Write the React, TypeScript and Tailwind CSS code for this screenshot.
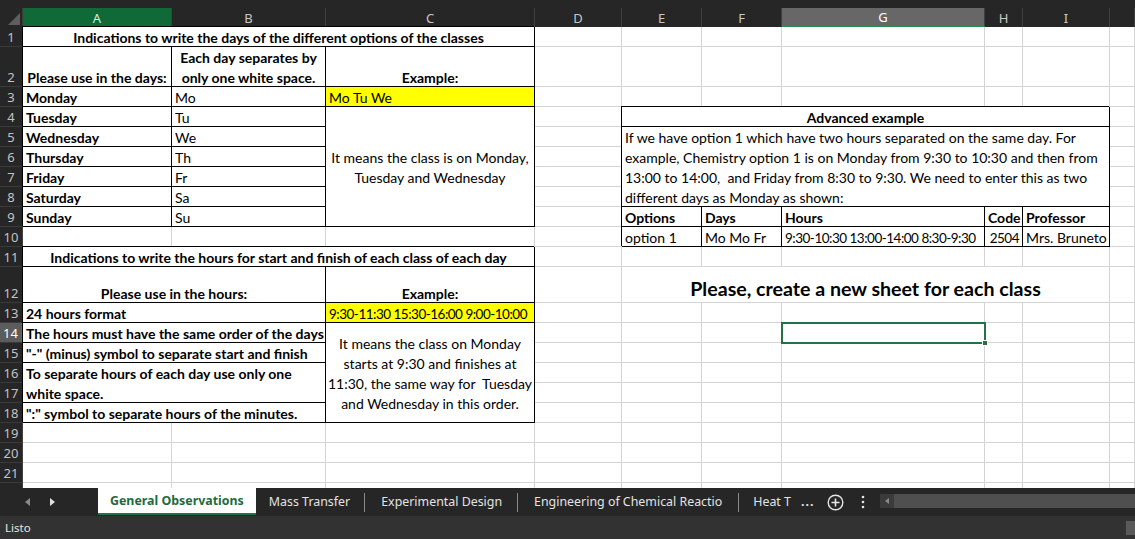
import React from "react";

const COLS = ["A", "B", "C", "D", "E", "F", "G", "H", "I", ""];
const ROWS = Array.from({ length: 22 }, (_, i) => i + 1);

const boxed = "border-r border-b border-black shadow-[-1px_-1px_0_0_#000]";

function Cell({
  className,
  lines,
  center,
  bottom,
  tight,
}: {
  className: string;
  lines: string[];
  center?: boolean;
  bottom?: boolean;
  tight?: boolean;
}) {
  return (
    <div className={`relative z-10 flex bg-white px-[3px] overflow-hidden ${bottom ? "items-end" : ""} ${className}`}>
      <div
        className={`leading-[20px] whitespace-pre ${bottom ? "translate-y-[2px]" : "translate-y-[1px]"} ${
          center ? "text-center" : ""
        } ${tight ? "text-[13.5px] tracking-[-0.5px]" : ""}`}
      >
        {lines.map((l) => (
          <div key={l}>{l}</div>
        ))}
      </div>
    </div>
  );
}

function Sheet() {
  return (
    <div className="grid h-[480px] overflow-hidden grid-cols-[23px_149px_154px_209px_87px_80px_80px_203px_38px_87px_25px] grid-rows-[19px_20px_40px_repeat(9,20px)_36px_repeat(10,20px)] font-['Lato',sans-serif] text-[14px] text-black">
      {/* corner */}
      <div className="col-start-1 row-start-1 relative bg-[#262626] border-r border-[#3a3a3a]">
        <svg className="absolute right-[2px] bottom-[2px]" width="12" height="12" viewBox="0 0 12 12">
          <polygon points="12,0 12,12 0,12" fill="#5e5e5e" />
        </svg>
      </div>
      {/* column headers */}
      {COLS.map((c, i) => {
        const base =
          "flex items-center justify-center pt-[2px] font-['Noto_Sans',sans-serif] text-[13px] row-start-1 ";
        let cls = "bg-[#262626] text-[#c8c8c8] border-r border-[#3f3f3f]";
        if (c === "A") cls = "bg-[#0f6a37] text-[#d8eadf] border-r border-[#3f3f3f]";
        if (c === "G") cls = "bg-[#676767] text-white border-b-2 border-b-[#2a8a55] border-r border-r-[#3f3f3f]";
        return (
          <div key={c + i} className={base + cls} style={{ gridColumn: i + 2 }}>
            {c}
          </div>
        );
      })}
      {/* row headers */}
      {ROWS.map((r) => (
        <div
          key={"h" + r}
          className={
            "col-start-1 flex items-end justify-center font-['Noto_Sans',sans-serif] text-[13px] leading-[18px] border-b border-[#3a3a3a] " +
            (r === 14
              ? "bg-[#5c5c5c] text-white border-r-2 border-r-[#2a8a55]"
              : "bg-[#262626] text-[#c3c3c3] border-r border-r-[#3f3f3f]")
          }
          style={{ gridRow: r + 1 }}
        >
          {r}
        </div>
      ))}
      {/* empty cells with gridlines */}
      {ROWS.map((r) =>
        COLS.map((c, i) => (
          <div
            key={r + "-" + i}
            className="bg-white border-r border-b border-[#d4d4d4]"
            style={{ gridRow: r + 1, gridColumn: i + 2 }}
          />
        ))
      )}

      {/* days table */}
      <Cell
        className={`col-start-2 col-span-3 row-start-2 justify-center font-bold ${boxed}`}
        lines={["Indications to write the days of the different options of the classes"]}
      />
      <Cell className={`col-start-2 row-start-3 justify-center font-bold ${boxed}`} lines={["Please use in the days:"]} bottom />
      <Cell
        className={`col-start-3 row-start-3 justify-center font-bold ${boxed}`}
        lines={["Each day separates by", "only one white space."]}
        center
        bottom
      />
      <Cell className={`col-start-4 row-start-3 justify-center font-bold ${boxed}`} lines={["Example:"]} bottom />

      <Cell className={`col-start-2 row-start-4 font-bold ${boxed}`} lines={["Monday"]} />
      <Cell className={`col-start-2 row-start-5 font-bold ${boxed}`} lines={["Tuesday"]} />
      <Cell className={`col-start-2 row-start-6 font-bold ${boxed}`} lines={["Wednesday"]} />
      <Cell className={`col-start-2 row-start-7 font-bold ${boxed}`} lines={["Thursday"]} />
      <Cell className={`col-start-2 row-start-8 font-bold ${boxed}`} lines={["Friday"]} />
      <Cell className={`col-start-2 row-start-9 font-bold ${boxed}`} lines={["Saturday"]} />
      <Cell className={`col-start-2 row-start-10 font-bold ${boxed}`} lines={["Sunday"]} />

      <Cell className={`col-start-3 row-start-4 ${boxed}`} lines={["Mo"]} />
      <Cell className={`col-start-3 row-start-5 ${boxed}`} lines={["Tu"]} />
      <Cell className={`col-start-3 row-start-6 ${boxed}`} lines={["We"]} />
      <Cell className={`col-start-3 row-start-7 ${boxed}`} lines={["Th"]} />
      <Cell className={`col-start-3 row-start-8 ${boxed}`} lines={["Fr"]} />
      <Cell className={`col-start-3 row-start-9 ${boxed}`} lines={["Sa"]} />
      <Cell className={`col-start-3 row-start-10 ${boxed}`} lines={["Su"]} />

      <Cell className={`col-start-4 row-start-4 !bg-[#ffff00] ${boxed}`} lines={["Mo Tu We"]} />
      <Cell
        className={`col-start-4 row-start-5 row-span-6 items-center justify-center ${boxed}`}
        lines={["It means the class is on Monday,", "Tuesday and Wednesday"]}
        center
      />

      {/* hours table */}
      <Cell
        className={`col-start-2 col-span-3 row-start-12 justify-center font-bold ${boxed}`}
        lines={["Indications to write the hours for start and finish of each class of each day"]}
      />
      <Cell
        className={`col-start-2 col-span-2 row-start-13 justify-center font-bold ${boxed}`}
        lines={["Please use in the hours:"]}
        bottom
      />
      <Cell className={`col-start-4 row-start-13 justify-center font-bold ${boxed}`} lines={["Example:"]} bottom />
      <Cell className={`col-start-2 col-span-2 row-start-14 font-bold ${boxed}`} lines={["24 hours format"]} />
      <Cell
        className={`col-start-4 row-start-14 !bg-[#ffff00] ${boxed}`}
        lines={["9:30-11:30 15:30-16:00 9:00-10:00"]}
        tight
      />
      <Cell
        className={`col-start-2 col-span-2 row-start-15 font-bold ${boxed}`}
        lines={["The hours must have the same order of the days"]}
      />
      <Cell
        className={`col-start-2 col-span-2 row-start-16 font-bold ${boxed}`}
        lines={['"-" (minus) symbol to separate start and finish']}
      />
      <Cell
        className={`col-start-2 col-span-2 row-start-17 row-span-2 font-bold ${boxed}`}
        lines={["To separate hours of each day use only one", "white space."]}
        bottom
      />
      <Cell
        className={`col-start-2 col-span-2 row-start-19 font-bold ${boxed}`}
        lines={['":" symbol to separate hours of the minutes.']}
      />
      <Cell
        className={`col-start-4 row-start-15 row-span-5 items-center justify-center ${boxed}`}
        lines={[
          "It means the class on Monday",
          "starts at 9:30 and finishes at",
          "11:30, the same way for  Tuesday",
          "and Wednesday in this order.",
        ]}
        center
      />

      {/* advanced example */}
      <Cell className={`col-start-6 col-span-5 row-start-5 justify-center font-bold ${boxed}`} lines={["Advanced example"]} />
      <Cell
        className={`col-start-6 col-span-5 row-start-6 row-span-4 ${boxed}`}
        lines={[
          "If we have option 1 which have two hours separated on the same day. For",
          "example, Chemistry option 1 is on Monday from 9:30 to 10:30 and then from",
          "13:00 to 14:00,  and Friday from 8:30 to 9:30. We need to enter this as two",
          "different days as Monday as shown:",
        ]}
      />
      <Cell className={`col-start-6 row-start-10 font-bold ${boxed}`} lines={["Options"]} />
      <Cell className={`col-start-7 row-start-10 font-bold ${boxed}`} lines={["Days"]} />
      <Cell className={`col-start-8 row-start-10 font-bold ${boxed}`} lines={["Hours"]} />
      <Cell className={`col-start-9 row-start-10 font-bold ${boxed}`} lines={["Code"]} />
      <Cell className={`col-start-10 row-start-10 font-bold ${boxed}`} lines={["Professor"]} />
      <Cell className={`col-start-6 row-start-11 ${boxed}`} lines={["option 1"]} />
      <Cell className={`col-start-7 row-start-11 ${boxed}`} lines={["Mo Mo Fr"]} />
      <Cell className={`col-start-8 row-start-11 ${boxed}`} lines={["9:30-10:30 13:00-14:00 8:30-9:30"]} tight />
      <Cell className={`col-start-9 row-start-11 justify-end ${boxed}`} lines={["2504"]} tight />
      <Cell className={`col-start-10 row-start-11 ${boxed}`} lines={["Mrs. Bruneto"]} />

      <Cell
        className="col-start-6 col-span-5 row-start-13 justify-center pb-[5px] font-bold text-[19.6px] border-r border-b border-[#d4d4d4]"
        lines={["Please, create a new sheet for each class"]}
        bottom
      />

      {/* active cell */}
      <div className="relative z-20 col-start-8 row-start-15 -m-px border-2 border-[#217346]">
        <div className="absolute right-[-4px] bottom-[-4px] w-[6px] h-[6px] bg-[#217346] border border-white" />
      </div>
    </div>
  );
}

function Tabs() {
  return (
    <div className="flex h-[28px] items-start bg-[#262626] font-['Noto_Sans',sans-serif] text-[12.4px] text-[#e3e3e3]">
      <div className="flex h-[27px] w-[98px] items-center gap-[19px] pl-[25px]">
        <svg width="6" height="8" viewBox="0 0 6 8">
          <polygon points="5,0 5,8 0,4" fill="#8a8a8a" />
        </svg>
        <svg width="6" height="8" viewBox="0 0 6 8">
          <polygon points="0,0 0,8 5,4" fill="#e0e0e0" />
        </svg>
      </div>
      <div className="flex h-[27px] items-center border-b-2 border-[#217346] bg-white px-[12px] pt-[2px] font-bold text-[#1d6b40]">
        General Observations
      </div>
      <div className="flex h-[27px] items-center pt-[1px]">
        <span className="pl-[13px] pr-[14px]">Mass Transfer</span>
        <span className="h-[19px] w-px bg-[#8a8a8a]" />
      </div>
      <div className="flex h-[27px] items-center pt-[1px]">
        <span className="pl-[16px] pr-[15px]">Experimental Design</span>
        <span className="h-[19px] w-px bg-[#8a8a8a]" />
      </div>
      <div className="flex h-[27px] items-center pt-[1px]">
        <span className="pl-[16px] pr-[16px]">Engineering of Chemical Reactio</span>
        <span className="h-[19px] w-px bg-[#8a8a8a]" />
      </div>
      <div className="flex h-[27px] items-center pl-[14px] pt-[1px]">
        <span>Heat T</span>
        <span className="pl-[10px] font-bold tracking-[1px]">...</span>
        <svg className="ml-[13px]" width="17" height="17" viewBox="0 0 17 17">
          <circle cx="8.5" cy="8.5" r="7.3" fill="none" stroke="#e6e6e6" strokeWidth="1.4" />
          <path d="M8.5 4.5v8M4.5 8.5h8" stroke="#e6e6e6" strokeWidth="1.6" />
        </svg>
        <svg className="ml-[17px]" width="4" height="14" viewBox="0 0 4 14">
          <circle cx="2" cy="2" r="1.3" fill="#e6e6e6" />
          <circle cx="2" cy="7" r="1.3" fill="#e6e6e6" />
          <circle cx="2" cy="12" r="1.3" fill="#e6e6e6" />
        </svg>
      </div>
      <div className="ml-[15px] mt-[6px] flex h-[14px] flex-1 bg-[#3b3b3b]">
        <div className="flex w-[14px] items-center justify-center">
          <svg width="4" height="6" viewBox="0 0 4 6">
            <polygon points="4,0 4,6 0,3" fill="#8a8a8a" />
          </svg>
        </div>
        <div className="flex-1 bg-[#4f4f4f]" />
      </div>
    </div>
  );
}

export default function App() {
  return (
    <div className="flex h-[539px] w-[1135px] flex-col overflow-hidden bg-[#262626]">
      <div className="h-[8px] bg-[#262626]" />
      <Sheet />
      <Tabs />
      <div className="flex h-[23px] items-center justify-between bg-[#323232] pl-[5px] font-['Noto_Sans',sans-serif] text-[11.5px] text-[#e6e6e6]">
        <span>Listo</span>
        <div className="h-[14px] w-[9px] bg-[#5a5a5a]" />
      </div>
    </div>
  );
}
